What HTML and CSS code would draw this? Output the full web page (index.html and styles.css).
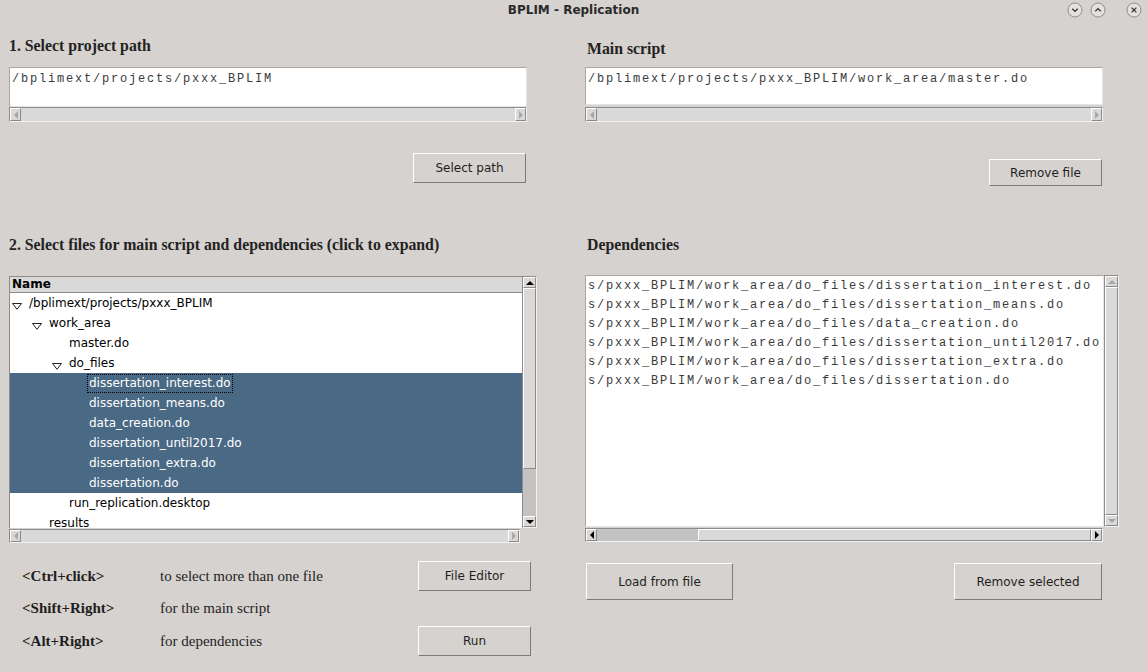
FILE: index.html
```html
<!DOCTYPE html>
<html>
<head>
<meta charset="utf-8">
<title>BPLIM - Replication</title>
<link rel="stylesheet" href="styles.css">
</head>
<body>
<div class="window">
  <div class="titlebar">
    <div class="tb-spacer"></div>
    <div class="title">BPLIM - Replication</div>
    <div class="wm-buttons">
      <span class="wm-btn"><svg width="16" height="16" viewBox="0 0 16 16"><circle cx="8" cy="8" r="7" fill="#e4e1de" stroke="#8f8c8a"/><path d="M5.3 6.8 L8 9.4 L10.7 6.8" fill="none" stroke="#333" stroke-width="1.3"/></svg></span>
      <span class="wm-btn"><svg width="16" height="16" viewBox="0 0 16 16"><circle cx="8" cy="8" r="7" fill="#e4e1de" stroke="#8f8c8a"/><path d="M5.3 9.2 L8 6.6 L10.7 9.2" fill="none" stroke="#333" stroke-width="1.3"/></svg></span>
      <span class="wm-btn wm-close"><svg width="16" height="16" viewBox="0 0 16 16"><circle cx="8" cy="8" r="7" fill="#e4e1de" stroke="#8f8c8a"/><path d="M5.6 5.6 L10.4 10.4 M10.4 5.6 L5.6 10.4" fill="none" stroke="#333" stroke-width="1.3"/></svg></span>
    </div>
  </div>

  <div class="content">
    <div class="col col-left">
      <h2 class="heading h-path">1. Select project path</h2>
      <div class="textbox tb-path">/bplimext/projects/pxxx_BPLIM</div>
      <div class="hscroll hs-top">
        <span class="harrow"><span class="tri tri-left off"></span></span>
        <span class="hthumb"></span>
        <span class="harrow right"><span class="tri tri-right off"></span></span>
      </div>
      <button class="btn btn-select">Select path</button>

      <h2 class="heading h-files">2. Select files for main script and dependencies (click to expand)</h2>
      <div class="tree-wrap">
        <div class="tree">
          <div class="tree-main">
            <div class="tree-head">Name</div>
            <div class="tree-body">
              <div class="row lvl0"><span class="toggle"><svg width="10" height="7" viewBox="0 0 10 7"><path d="M0.5 0.5 H9.5 L5 6.3 Z" fill="#fff" stroke="#222" stroke-width="1"/></svg></span><span class="label">/bplimext/projects/pxxx_BPLIM</span></div>
              <div class="row lvl1"><span class="toggle"><svg width="10" height="7" viewBox="0 0 10 7"><path d="M0.5 0.5 H9.5 L5 6.3 Z" fill="#fff" stroke="#222" stroke-width="1"/></svg></span><span class="label">work_area</span></div>
              <div class="row lvl2"><span class="toggle"></span><span class="label">master.do</span></div>
              <div class="row lvl2"><span class="toggle"><svg width="10" height="7" viewBox="0 0 10 7"><path d="M0.5 0.5 H9.5 L5 6.3 Z" fill="#fff" stroke="#222" stroke-width="1"/></svg></span><span class="label">do_files</span></div>
              <div class="row lvl3 sel"><span class="toggle"></span><span class="label focus">dissertation_interest.do</span></div>
              <div class="row lvl3 sel"><span class="toggle"></span><span class="label">dissertation_means.do</span></div>
              <div class="row lvl3 sel"><span class="toggle"></span><span class="label">data_creation.do</span></div>
              <div class="row lvl3 sel"><span class="toggle"></span><span class="label">dissertation_until2017.do</span></div>
              <div class="row lvl3 sel"><span class="toggle"></span><span class="label">dissertation_extra.do</span></div>
              <div class="row lvl3 sel"><span class="toggle"></span><span class="label">dissertation.do</span></div>
              <div class="row lvl2"><span class="toggle"></span><span class="label">run_replication.desktop</span></div>
              <div class="row lvl1"><span class="toggle"></span><span class="label">results</span></div>
            </div>
          </div>
          <div class="vscroll vs-tree">
            <span class="varrow"><span class="tri tri-up"></span></span>
            <span class="vthumb vthumb-tree"></span>
            <span class="vtrough"></span>
            <span class="varrow down"><span class="tri tri-down"></span></span>
          </div>
        </div>
        <div class="hscroll hs-tree">
          <span class="harrow"><span class="tri tri-left off"></span></span>
          <span class="hthumb"></span>
          <span class="harrow right"><span class="tri tri-right off"></span></span>
        </div>
      </div>

      <div class="hints">
        <span class="key">&lt;Ctrl+click&gt;</span>
        <span class="desc">to select more than one file</span>
        <button class="btn btn-small">File Editor</button>
        <span class="key">&lt;Shift+Right&gt;</span>
        <span class="desc">for the main script</span>
        <span class="empty"></span>
        <span class="key">&lt;Alt+Right&gt;</span>
        <span class="desc">for dependencies</span>
        <button class="btn btn-small">Run</button>
      </div>
    </div>

    <div class="col col-right">
      <h2 class="heading h-main">Main script</h2>
      <div class="textbox tb-main">/bplimext/projects/pxxx_BPLIM/work_area/master.do</div>
      <div class="hscroll hs-top">
        <span class="harrow"><span class="tri tri-left off"></span></span>
        <span class="hthumb"></span>
        <span class="harrow right"><span class="tri tri-right off"></span></span>
      </div>
      <button class="btn btn-remove-file">Remove file</button>

      <h2 class="heading h-deps">Dependencies</h2>
      <div class="deps-wrap">
        <div class="deps">
          <div class="listbox">
            <div class="line">s/pxxx_BPLIM/work_area/do_files/dissertation_interest.do</div>
            <div class="line">s/pxxx_BPLIM/work_area/do_files/dissertation_means.do</div>
            <div class="line">s/pxxx_BPLIM/work_area/do_files/data_creation.do</div>
            <div class="line">s/pxxx_BPLIM/work_area/do_files/dissertation_until2017.do</div>
            <div class="line">s/pxxx_BPLIM/work_area/do_files/dissertation_extra.do</div>
            <div class="line">s/pxxx_BPLIM/work_area/do_files/dissertation.do</div>
          </div>
          <div class="vscroll vs-deps">
            <span class="varrow"><span class="tri tri-up off"></span></span>
            <span class="vthumb vthumb-full"></span>
            <span class="varrow down"><span class="tri tri-down off"></span></span>
          </div>
        </div>
        <div class="hscroll hs-deps">
          <span class="harrow"><span class="tri tri-left"></span></span>
          <span class="htrough htrough-deps"></span>
          <span class="hthumb hthumb-raised"></span>
          <span class="harrow right"><span class="tri tri-right"></span></span>
        </div>
      </div>
      <div class="deps-buttons">
        <button class="btn btn-big btn-load">Load from file</button>
        <button class="btn btn-big btn-remove-sel">Remove selected</button>
      </div>
    </div>
  </div>
</div>
</body>
</html>
```

FILE: styles.css
```css
html, body {
  margin: 0;
  padding: 0;
}

body {
  width: 1147px;
  height: 672px;
  overflow: hidden;
  background: #d6d2cf;
  font-family: "DejaVu Sans", sans-serif;
  color: #1e1e1e;
}

.window {
  display: flex;
  flex-direction: column;
  height: 672px;
}

/* ---------- title bar ---------- */
.titlebar {
  height: 22px;
  display: grid;
  grid-template-columns: 1fr auto 1fr;
  align-items: start;
}

.title {
  font: bold 12px/21px "DejaVu Sans", sans-serif;
  color: #2a2a2a;
}

.wm-buttons {
  justify-self: end;
  display: flex;
  align-items: center;
  height: 20px;
  padding-right: 5px;
  gap: 7px;
}

.wm-btn {
  display: flex;
  width: 16px;
  height: 16px;
}

.wm-close {
  margin-left: 13px;
}

/* ---------- main content ---------- */
.content {
  display: flex;
  padding-left: 9px;
  gap: 47px;
}

.col {
  display: flex;
  flex-direction: column;
  align-items: flex-start;
}

.col-left {
  width: 529px;
}

.col-right {
  width: 534px;
}

.heading {
  margin: 0;
  font: bold 15.8px/20px "Liberation Serif", serif;
  color: #232323;
}

.h-path {
  margin-top: 14px;
}

.h-files {
  margin-top: 52px;
}

.h-main {
  margin-top: 17px;
  padding-left: 2px;
}

.h-deps {
  margin-top: 49px;
  padding-left: 2px;
}

/* ---------- text boxes ---------- */
.textbox {
  box-sizing: border-box;
  width: 518px;
  background: #fff;
  border: 1px solid #a9a7a5;
  border-right-color: #e6e4e2;
  border-bottom-color: #e6e4e2;
  padding: 2px 2px 0;
  font: 12px/19px "Liberation Mono", monospace;
  letter-spacing: 1.8px;
  color: #3a3a3a;
  white-space: pre;
  overflow: hidden;
}

.tb-path {
  height: 40px;
  margin-top: 11px;
}

.tb-main {
  height: 38px;
  margin-top: 8px;
  margin-bottom: 2px;
}

/* ---------- scrollbars ---------- */
.hscroll {
  box-sizing: border-box;
  display: flex;
  width: 518px;
  height: 15px;
  border: 1px solid #8f8d8b;
  border-right-color: #f2f2f2;
  border-bottom-color: #f2f2f2;
  background: #c3c3c3;
}

.hs-tree {
  width: 511px;
  height: 14px;
  margin-top: 1px;
}

.hs-deps {
  height: 14px;
  margin-top: 1px;
}

.harrow {
  box-sizing: border-box;
  width: 11px;
  flex: none;
  display: flex;
  align-items: center;
  justify-content: center;
  background: #d9d9d9;
  border-top: 1px solid #fff;
  border-left: 1px solid #fff;
  border-right: 1px solid #8a8a8a;
  border-bottom: 1px solid #8a8a8a;
}

.hthumb {
  flex: 1;
  background: #d9d9d9;
}

.hthumb-raised {
  box-sizing: border-box;
  border-top: 1px solid #fff;
  border-left: 1px solid #fff;
  border-bottom: 1px solid #8a8a8a;
  border-right: 1px solid #8a8a8a;
}

.htrough-deps {
  width: 101px;
  flex: none;
}

.vscroll {
  box-sizing: border-box;
  display: flex;
  flex-direction: column;
  width: 15px;
  height: 252px;
  border: 1px solid #8f8d8b;
  border-right-color: #f2f2f2;
  border-bottom-color: #f2f2f2;
  background: #c3c3c3;
}

.varrow {
  box-sizing: border-box;
  height: 11px;
  flex: none;
  display: flex;
  align-items: center;
  justify-content: center;
  background: #d9d9d9;
  border-top: 1px solid #fff;
  border-left: 1px solid #fff;
  border-right: 1px solid #8a8a8a;
  border-bottom: 1px solid #8a8a8a;
}

.vthumb {
  box-sizing: border-box;
  background: #d9d9d9;
  border-top: 1px solid #fff;
  border-left: 1px solid #fff;
  border-right: 1px solid #8a8a8a;
  border-bottom: 1px solid #8a8a8a;
}

.vthumb-tree {
  height: 181px;
  flex: none;
}

.vthumb-full {
  flex: 1;
}

.vtrough {
  flex: 1;
}

.tri {
  width: 0;
  height: 0;
  display: block;
}

.tri-left {
  border-top: 4px solid transparent;
  border-bottom: 4px solid transparent;
  border-right: 4px solid #000;
}

.tri-right {
  border-top: 4px solid transparent;
  border-bottom: 4px solid transparent;
  border-left: 4px solid #000;
}

.tri-up {
  border-left: 4px solid transparent;
  border-right: 4px solid transparent;
  border-bottom: 4px solid #000;
}

.tri-down {
  border-left: 4px solid transparent;
  border-right: 4px solid transparent;
  border-top: 4px solid #000;
}

.tri-left.off { border-right-color: #a8a8a8; }
.tri-right.off { border-left-color: #a8a8a8; }
.tri-up.off { border-bottom-color: #a8a8a8; }
.tri-down.off { border-top-color: #a8a8a8; }

/* ---------- buttons ---------- */
.btn {
  box-sizing: border-box;
  padding: 0;
  margin: 0;
  background: #d6d2cf;
  border: 1px solid;
  border-color: #fff #7d7b79 #7d7b79 #fff;
  font: 12px "DejaVu Sans", sans-serif;
  color: #1e1e1e;
  cursor: default;
}

.btn-select {
  width: 113px;
  height: 30px;
  margin-top: 31px;
  align-self: flex-end;
  margin-right: 12px;
}

.btn-remove-file {
  width: 113px;
  height: 27px;
  margin-top: 37px;
  align-self: flex-end;
  margin-right: 17px;
}

.btn-small {
  width: 113px;
  height: 30px;
}

.btn-big {
  height: 37px;
}

.btn-load {
  width: 147px;
}

.btn-remove-sel {
  width: 148px;
}

/* ---------- tree ---------- */
.tree-wrap {
  margin-top: 21px;
}

.tree {
  display: flex;
  height: 252px;
}

.tree-main {
  box-sizing: border-box;
  width: 513px;
  height: 252px;
  display: flex;
  flex-direction: column;
  background: #fff;
  border-left: 1px solid #8f8d8b;
  border-top: 1px solid #8f8d8b;
  overflow: hidden;
}

.tree-head {
  flex: none;
  height: 15px;
  padding-left: 2px;
  background: #d9d9d9;
  border-bottom: 1px solid #8f8d8b;
  font: bold 12px/15px "DejaVu Sans", sans-serif;
  color: #000;
}

.tree-body {
  flex: 1;
  overflow: hidden;
}

.row {
  display: flex;
  align-items: center;
  height: 20px;
  white-space: nowrap;
  font: 12px/17px "DejaVu Sans", sans-serif;
  color: #000;
  padding-left: 2px;
}

.row.lvl1 { padding-left: 22px; }
.row.lvl2 { padding-left: 42px; }
.row.lvl3 { padding-left: 62px; }

.row.sel {
  background: #4a6984;
  color: #fff;
}

.toggle {
  width: 17px;
  height: 20px;
  flex: none;
  display: flex;
  align-items: center;
}

.toggle svg {
  margin-top: 6px;
}

.label {
  display: block;
  height: 17px;
}

.focus {
  outline: 1px dotted #000;
  outline-offset: 0;
  padding: 0 1px;
  margin-left: -1px;
}

/* ---------- hints ---------- */
.hints {
  display: grid;
  grid-template-columns: 138px 258px 113px;
  grid-template-rows: 30px 35px 30px;
  align-items: center;
  margin-top: 18px;
  padding-left: 13px;
}

.key {
  font: bold 15px "Liberation Serif", serif;
  color: #1e1e1e;
}

.desc {
  font: 15px "Liberation Serif", serif;
  color: #1e1e1e;
}

/* ---------- dependencies ---------- */
.deps-wrap {
  margin-top: 20px;
}

.deps {
  display: flex;
  height: 252px;
}

.listbox {
  box-sizing: border-box;
  width: 519px;
  height: 252px;
  background: #fff;
  border: 1px solid #a9a7a5;
  border-right-color: #e6e4e2;
  border-bottom-color: #e6e4e2;
  padding: 1px 2px 0;
  overflow: hidden;
}

.line {
  font: 12px/19px "Liberation Mono", monospace;
  letter-spacing: 1.8px;
  color: #3a3a3a;
  white-space: pre;
}

.deps-buttons {
  display: flex;
  justify-content: space-between;
  width: 516px;
  margin-top: 21px;
  padding-left: 1px;
}
```
